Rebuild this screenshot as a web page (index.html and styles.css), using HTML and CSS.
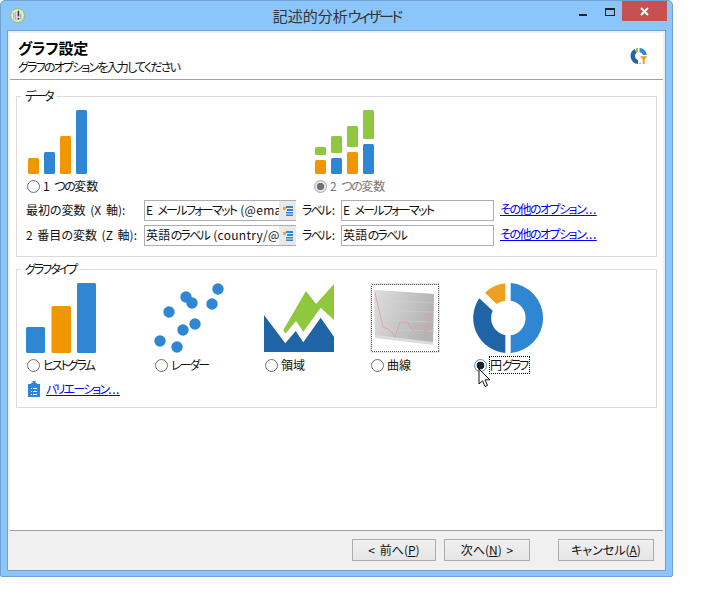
FILE: index.html
```html
<!DOCTYPE html>
<html lang="ja">
<head>
<meta charset="utf-8">
<title>記述的分析ウィザード</title>
<link rel="stylesheet" href="styles.css">
</head>
<body>
<div class="window">
  <div class="titlebar">
    <div class="titlebar-left">
      <svg class="app-icon" width="15" height="15" viewBox="0 0 16 16"><circle cx="8" cy="8" r="7.400" fill="#e4e6e0" stroke="#8fbf4a"/><path d="M4 5v7M6 4v9" stroke="#b8b8b8" stroke-width="1.500"/><path d="M9 3v6" stroke="#333" stroke-width="1.600"/><circle cx="9" cy="11.500" r="1" fill="#333"/><path d="M11.500 6v6" stroke="#999"/></svg>
    </div>
    <div class="title">記述的分析<span class="title-kana">ウィザード</span></div>
    <div class="controls">
      <span class="ctl-min"></span>
      <span class="ctl-max"></span>
      <span class="ctl-close"><svg width="9" height="9" viewBox="0 0 9 9"><path d="M1 1l7 7M8 1l-7 7" stroke="#fff" stroke-width="2"/></svg></span>
    </div>
  </div>
  <div class="client">
    <div class="content">
      <header class="head">
        <div class="head-text">
          <h1 class="head-title">グラフ設定</h1>
          <p class="head-sub">グラフのオプションを入力してください</p>
        </div>
        <svg class="head-icon" width="18" height="18" viewBox="0 0 18 18">
          <path d="M6 1.200A8 8 0 0 1 8 1V5A4 4 0 0 0 6 5.500Z" fill="#8cc63f"/>
          <path d="M9.500 1A8 8 0 0 1 17 8H13A4 4 0 0 0 9.500 5Z" fill="#2f86d2"/>
          <path d="M4.800 2A8 8 0 0 0 8 17V13A4 4 0 0 1 6.500 6Z" fill="#2064a8"/>
          <path d="M9.500 15.500h1V17h-1Z" fill="#2f86d2"/>
          <path d="M10 9.200h7.400l-2.700 3.200V17h-2v-4.600Z" fill="#f39a1e"/>
        </svg>
      </header>
      <div class="groups">
        <fieldset class="group group-data">
          <legend>データ</legend>
          <div class="variable-choice">
            <div class="variable">
              <svg class="chart-small" width="60" height="64" viewBox="0 0 60 64">
                <rect class="c-orange" x="0" y="48" width="11" height="16" rx="1.500"/>
                <rect class="c-blue" x="16" y="42" width="11" height="22" rx="1.500"/>
                <rect class="c-orange" x="32" y="26" width="11" height="38" rx="1.500"/>
                <rect class="c-blue" x="48" y="0" width="11" height="64" rx="1.500"/>
              </svg>
              <label class="radio-row"><input type="radio" name="vars"><span>1 <span class="kana-a">つの</span>変数</span></label>
            </div>
            <div class="variable">
              <svg class="chart-small" width="60" height="64" viewBox="0 0 60 64">
                <rect class="c-green" x="0" y="37" width="11" height="8" rx="1.500"/>
                <rect class="c-orange" x="0" y="50" width="11" height="14" rx="1.500"/>
                <rect class="c-green" x="16" y="26" width="11" height="17" rx="1.500"/>
                <rect class="c-blue" x="16" y="48" width="11" height="16" rx="1.500"/>
                <rect class="c-green" x="32" y="16" width="11" height="21" rx="1.500"/>
                <rect class="c-orange" x="32" y="42" width="11" height="22" rx="1.500"/>
                <rect class="c-green" x="48" y="0" width="11" height="29" rx="1.500"/>
                <rect class="c-blue" x="48" y="34" width="11" height="30" rx="1.500"/>
              </svg>
              <label class="radio-row is-disabled"><input type="radio" name="vars" checked disabled><span>2 <span class="kana-a">つの</span>変数</span></label>
            </div>
          </div>
          <div class="fields">
            <span class="field-label">最初の変数 (X 軸):</span>
            <div class="picker">
              <span class="picker-text">E <span class="kana-b">メールフォーマット</span> (@email)</span>
              <span class="picker-btn"><svg width="10" height="10" viewBox="0 0 10 10"><rect x="0" y="1" width="3" height="3" fill="#f5a623"/><rect x="3" y="0" width="7" height="2" fill="#2f86d2"/><rect x="4" y="3" width="6" height="2" fill="#2f86d2"/><rect x="3" y="6" width="7" height="1.500" fill="#2f86d2"/><rect x="3" y="8.500" width="7" height="1.500" fill="#2f86d2"/></svg></span>
            </div>
            <span class="field-label label-2"><span class="kana-c">ラベル</span>:</span>
            <div class="textbox">E <span class="kana-b">メールフォーマット</span></div>
            <a class="link link-more" href="#">その他のオプション<span class="dots">...</span></a>

            <span class="field-label">2 番目の変数 (Z 軸):</span>
            <div class="picker">
              <span class="picker-text">英語<span class="kana-b">のラベル</span> (country/@label)</span>
              <span class="picker-btn"><svg width="10" height="10" viewBox="0 0 10 10"><rect x="0" y="1" width="3" height="3" fill="#f5a623"/><rect x="3" y="0" width="7" height="2" fill="#2f86d2"/><rect x="4" y="3" width="6" height="2" fill="#2f86d2"/><rect x="3" y="6" width="7" height="1.500" fill="#2f86d2"/><rect x="3" y="8.500" width="7" height="1.500" fill="#2f86d2"/></svg></span>
            </div>
            <span class="field-label label-2"><span class="kana-c">ラベル</span>:</span>
            <div class="textbox">英語<span class="kana-b">のラベル</span></div>
            <a class="link link-more" href="#">その他のオプション<span class="dots">...</span></a>
          </div>
        </fieldset>

        <fieldset class="group group-type">
          <legend>グラフタイプ</legend>
          <div class="types">
            <div class="type">
              <svg class="chart-big" width="70" height="70" viewBox="0 0 70 70">
                <rect class="c-blue" x="0" y="44" width="19" height="26" rx="1.500"/>
                <rect class="c-orange" x="25.500" y="23" width="19.500" height="47" rx="1.500"/>
                <rect class="c-blue" x="51" y="0" width="19" height="70" rx="1.500"/>
              </svg>
              <label class="radio-row"><input type="radio" name="type"><span class="kana-c">ヒストグラム</span></label>
            </div>
            <div class="type">
              <svg class="chart-big" width="70" height="70" viewBox="154 283 70 70">
                <g class="c-blue">
                  <circle cx="218" cy="289" r="5.700"/><circle cx="186" cy="297" r="5.700"/><circle cx="192" cy="303" r="5.700"/><circle cx="212" cy="304" r="5.700"/><circle cx="169" cy="312" r="5.700"/><circle cx="195" cy="324" r="5.700"/><circle cx="183" cy="330" r="5.700"/><circle cx="160" cy="341" r="5.700"/><circle cx="177" cy="347" r="5.700"/>
                </g>
              </svg>
              <label class="radio-row"><input type="radio" name="type"><span class="kana-c">レーダー</span></label>
            </div>
            <div class="type">
              <svg class="chart-big" width="70" height="70" viewBox="264 283 70 70">
                <path d="M264 315L285.300 343.300L295.700 331L303.300 342.300L320.700 317.700L334 336.700V352H264Z" fill="#2064a8"/>
                <path class="c-green" d="M283.300 330L306 291L316 304L334 284V320L320.700 307.700L303.300 331.700L296 321L285.300 333.700Z"/>
              </svg>
              <label class="radio-row"><input type="radio" name="type"><span>領域</span></label>
            </div>
            <div class="type">
              <svg class="chart-big" width="70" height="70" viewBox="0 0 70 70">
                <defs><linearGradient id="panel" x1="0" y1="0" x2="1" y2="0.300"><stop offset="0" stop-color="#dedede"/><stop offset="1" stop-color="#b4b4b4"/></linearGradient></defs>
                <rect x="0" y="0" width="70" height="70" rx="2" fill="#e6e6e6"/>
                <rect x="1.500" y="1.500" width="67" height="67" fill="#fff" stroke="#555" stroke-dasharray="1 1" shape-rendering="crispEdges"/>
                <path d="M4 7L64 11L63 62L5 55Z" fill="#dcdcdc"/>
                <path d="M4 7L64 11L63 59L5 52Z" fill="url(#panel)"/>
                <path d="M5 17L64 20M5 27L64 29M5 37L64 39M5 46L64 48" stroke="#d2d2d2" stroke-width="0.500" fill="none"/>
                <path d="M5 10L13 44L20 47L25 54L30 39L37 39L43 48L49 41L56 49L63 25" fill="none" stroke="#e79a9a" stroke-width="0.800"/>
              </svg>
              <label class="radio-row"><input type="radio" name="type"><span>曲線</span></label>
            </div>
            <div class="type">
              <svg class="chart-big" width="70" height="70" viewBox="0 0 70 70">
                <path class="c-blue" d="M37.700 .1A35 35 0 0 1 37.700 69.900V52.300A17.500 17.500 0 0 0 37.700 17.700Z"/>
                <path d="M32.300 69.900A35 35 0 0 1 6.300 15.300L19.700 27.700A17.500 17.500 0 0 0 32.300 52.300Z" fill="#2064a8"/>
                <path d="M12 9.700A35 35 0 0 1 32.300 .3V17.700A17.500 17.500 0 0 0 23.700 21Z" fill="#f0a020"/>
              </svg>
              <label class="radio-row radio-focus"><input type="radio" name="type" checked><span>円<span class="kana-c">グラフ</span></span></label>
            </div>
          </div>
          <div class="variation">
            <svg width="12" height="16" viewBox="0 0 12 16"><path d="M0 3h3V2h1.500V0h3v2H9v1h3v13H0Z" fill="#2f86d2"/><path d="M3 7h1v1H3ZM5 7h4v1H5ZM3 10h1v1H3ZM5 10h4v1H5ZM3 13h1v1H3ZM5 13h4v1H5Z" fill="#fff"/></svg>
            <a class="link link-variation" href="#">バリエーション<span class="dots">...</span></a>
          </div>
        </fieldset>
      </div>
    </div>
    <footer class="footer">
      <button class="btn btn-back" type="button">&lt; 前へ(<u>P</u>)</button>
      <button class="btn btn-next" type="button">次へ(<u>N</u>) &gt;</button>
      <button class="btn btn-cancel" type="button">キャンセル(<u>A</u>)</button>
    </footer>
  </div>
  <svg class="cursor" width="13" height="20" viewBox="0 0 13 20"><path d="M1 1V16L4.500 12.800L7 18.500L9.500 17.400L7 11.800H11.800Z" fill="#fff" stroke="#111"/></svg>
</div>
</body>
</html>
```
FILE: styles.css
```css
* { box-sizing: border-box; }
html, body { margin: 0; padding: 0; background: #fff; }
body {
  width: 702px;
  height: 605px;
  overflow: hidden;
  font: 12px/16px "Noto Sans CJK JP", "Noto Sans", sans-serif;
  font-feature-settings: "palt";
  color: #111;
}
.window {
  position: relative;
  display: flex;
  flex-direction: column;
  width: 673px;
  height: 577px;
  background: #8ac6fb;
  border: 1px solid #6fa2d2;
  border-radius: 5px 5px 2px 2px;
}
.titlebar {
  display: grid;
  grid-template-columns: 1fr auto 1fr;
  height: 29px;
  flex: none;
}
.titlebar-left { padding: 7px 0 0 9px; }
.app-icon { display: block; }
.title {
  font-size: 15px;
  line-height: 30px;
  color: #333;
}
.title-kana { letter-spacing: -2.700px; }
.controls {
  display: flex;
  justify-content: flex-end;
  align-items: flex-start;
  padding-right: 5px;
}
.ctl-min {
  width: 8px;
  height: 2px;
  margin: 13px 18px 0 0;
  background: #222;
}
.ctl-max {
  width: 10px;
  height: 8px;
  margin: 7px 7px 0 0;
  border: 1px solid #222;
  border-top-width: 2px;
}
.ctl-close {
  display: flex;
  align-items: center;
  justify-content: center;
  width: 45px;
  height: 20px;
  background: #c75050;
}
.ctl-close svg { display: block; }
.client {
  flex: 1;
  display: flex;
  flex-direction: column;
  margin: 0 6px 5px;
  background: #f0f0f0;
  border: 1px solid #6fa2d2;
}
.content {
  flex: 1;
  margin: 2px 2px 0;
  background: #fff;
  border-bottom: 1px solid #a0a0a0;
}
.head {
  display: flex;
  justify-content: space-between;
  height: 47px;
  padding: 5px 15px 0 8px;
  border-bottom: 1px solid #a0a0a0;
}
.head-title {
  margin: 0;
  font-size: 15px;
  line-height: 20px;
  font-weight: 700;
  color: #000;
  letter-spacing: -0.200px;
}
.head-sub {
  margin: 0;
  font-size: 12px;
  line-height: 18px;
  letter-spacing: -1.800px;
}
.head-icon { margin-top: 9px; }
.groups {
  padding: 9px 6px 0 6px;
}
.group {
  margin: 0;
  padding: 7px 8px 10px 9px;
  border: 1px solid #dcdcdc;
  min-width: 0;
}
.group legend {
  margin-left: -5px;
  padding: 0 4px;
  font-size: 12px;
  line-height: 14px;
  letter-spacing: -2px;
}
.group-type { margin-top: 5px; }
.variable-choice { display: flex; }
.variable { width: 288px; }
.chart-small { display: block; margin-left: 1px; }
.variable:first-child .chart-small { margin-left: 2px; }
.radio-row {
  display: flex;
  align-items: center;
  gap: 3px;
  height: 16px;
  margin-top: 4px;
  word-spacing: 2px;
}
.radio-row input {
  appearance: none;
  flex: none;
  width: 13px;
  height: 13px;
  margin: 0 0 0 1px;
  border: 1px solid #707070;
  border-radius: 50%;
  background: #fff;
}
.variable:last-child .radio-row input { margin-left: 0; }
.radio-row input:checked {
  border-color: #3c92e6;
  background: radial-gradient(circle, #222 0 3.600px, #fff 4.200px);
}
.radio-row input:disabled {
  border-color: #a8a8a8;
  background: radial-gradient(circle, #707070 0 3.400px, #e6e6e6 4px);
}
.is-disabled { color: #777; }
.kana-a { letter-spacing: -1.500px; }
.kana-b { letter-spacing: -1.700px; }
.kana-c { letter-spacing: -2px; }
.fields {
  display: grid;
  grid-template-columns: 118px 152px 45px 153px auto;
  grid-auto-rows: 21px;
  row-gap: 4px;
  align-items: center;
  margin-top: 6px;
}
.field-label {
  white-space: nowrap;
  word-spacing: 2px;
  margin-bottom: 2px;
}
.label-2 { padding-left: 6px; }
.label-2 .kana-c { padding-right: 2px; }
.picker, .textbox {
  height: 21px;
  border: 1px solid #abadb3;
  background: #fff;
  line-height: 17px;
  overflow: hidden;
  white-space: nowrap;
  word-spacing: 1px;
  letter-spacing: 0.300px;
}
.textbox { padding-left: 1px; }
.picker {
  display: flex;
  border-right: 0;
}
.picker-text {
  flex: 1;
  min-width: 0;
  padding-left: 1px;
  overflow: hidden;
}
.picker-btn {
  flex: none;
  display: flex;
  align-items: center;
  justify-content: center;
  width: 17px;
  margin: -1px 0;
  background: #e8e8e8;
}
.link {
  color: #0000f5;
  text-decoration: underline;
  white-space: nowrap;
}
.dots { letter-spacing: 0.500px; }
.link-more {
  padding-left: 6px;
  margin-bottom: 3px;
  letter-spacing: -1.500px;
}
.link-variation { letter-spacing: -1.800px; }
.types {
  display: grid;
  grid-template-columns: 128px 110px 106px 103px auto;
}
.chart-big { display: block; }
.type .radio-row { margin-top: 4px; }
.radio-focus { gap: 3px; }
.radio-focus span {
  outline: 1px dotted #000;
  outline-offset: 0;
}
.radio-focus span span { outline: 0; }
.radio-focus > span { padding-right: 2px; }
.variation {
  display: flex;
  align-items: center;
  gap: 6px;
  height: 16px;
  margin: 8px 0 0 2px;
}
.variation svg { display: block; }
.footer {
  flex: none;
  display: flex;
  justify-content: flex-end;
  align-items: flex-start;
  gap: 8px;
  height: 39px;
  padding: 8px 11px 0 0;
}
.btn {
  height: 22px;
  padding: 0;
  font: inherit;
  line-height: 18px;
  color: #111;
  border: 1px solid #acacac;
  background: linear-gradient(#f0f0f0, #e5e5e5);
  word-spacing: 2px;
}
.btn-back { width: 84px; }
.btn-next { width: 86px; }
.btn-cancel { width: 96px; margin-left: 20px; }
.c-orange { fill: #f09600; }
.c-blue { fill: #2f86d2; }
.c-green { fill: #8fc73e; }
.cursor {
  position: absolute;
  left: 477px;
  top: 367px;
}
```
